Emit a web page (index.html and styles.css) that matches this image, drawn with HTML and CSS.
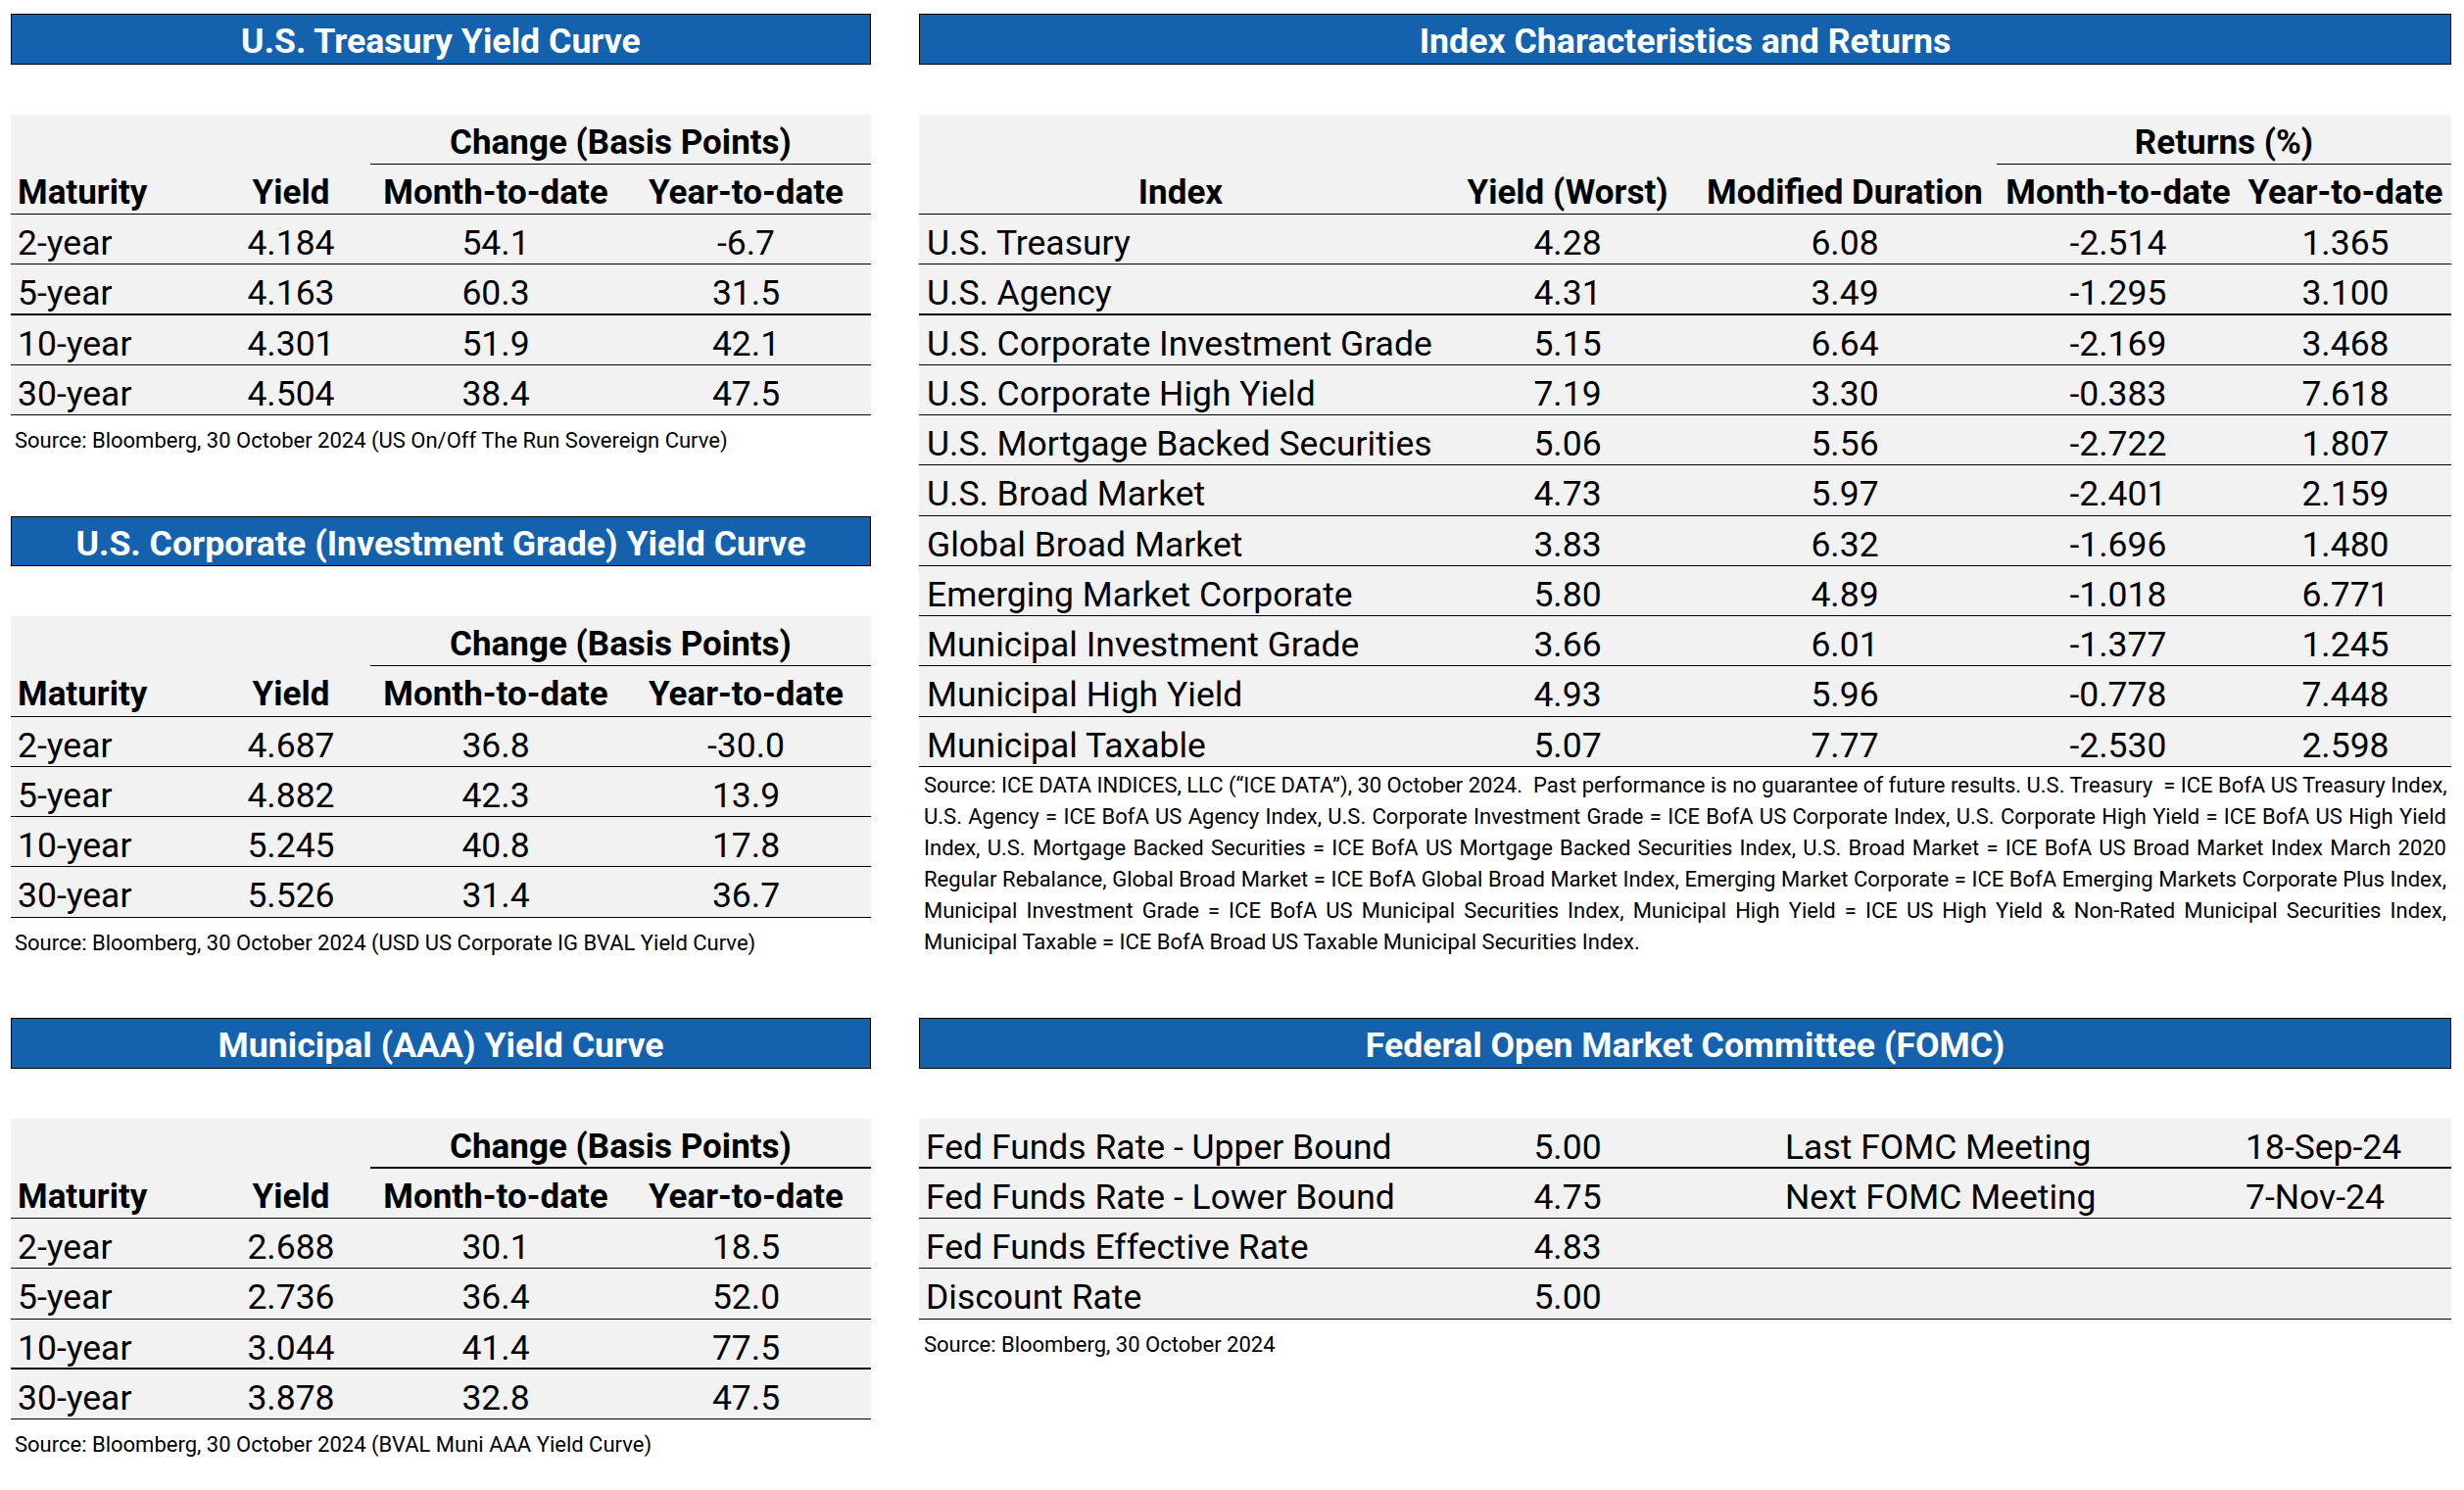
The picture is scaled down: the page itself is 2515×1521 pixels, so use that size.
FILE: index.html
```html
<!DOCTYPE html>
<html lang="en">
<head>
<meta charset="utf-8">
<title>Market Data</title>
<link rel="stylesheet" href="styles.css">
</head>
<body>
<div class="page">
  <div class="col col-left">
    <section class="block">
      <h2 class="title">U.S. Treasury Yield Curve</h2>
      <div class="spacer"></div>
      <div class="tbl curve">
        <div class="row hdr1"><span class="group">Change (Basis Points)</span></div>
        <div class="row hdr2"><span class="first">Maturity</span><span>Yield</span><span>Month-to-date</span><span>Year-to-date</span></div>
        <div class="row"><span class="first">2-year</span><span>4.184</span><span>54.1</span><span>-6.7</span></div>
        <div class="row thick"><span class="first">5-year</span><span>4.163</span><span>60.3</span><span>31.5</span></div>
        <div class="row"><span class="first">10-year</span><span>4.301</span><span>51.9</span><span>42.1</span></div>
        <div class="row"><span class="first">30-year</span><span>4.504</span><span>38.4</span><span>47.5</span></div>
      </div>
      <p class="source">Source: Bloomberg, 30 October 2024 (US On/Off The Run Sovereign Curve)</p>
    </section>

    <section class="block">
      <h2 class="title">U.S. Corporate (Investment Grade) Yield Curve</h2>
      <div class="spacer"></div>
      <div class="tbl curve">
        <div class="row hdr1"><span class="group">Change (Basis Points)</span></div>
        <div class="row hdr2"><span class="first">Maturity</span><span>Yield</span><span>Month-to-date</span><span>Year-to-date</span></div>
        <div class="row"><span class="first">2-year</span><span>4.687</span><span>36.8</span><span>-30.0</span></div>
        <div class="row"><span class="first">5-year</span><span>4.882</span><span>42.3</span><span>13.9</span></div>
        <div class="row"><span class="first">10-year</span><span>5.245</span><span>40.8</span><span>17.8</span></div>
        <div class="row"><span class="first">30-year</span><span>5.526</span><span>31.4</span><span>36.7</span></div>
      </div>
      <p class="source">Source: Bloomberg, 30 October 2024 (USD US Corporate IG BVAL Yield Curve)</p>
    </section>

    <section class="block">
      <h2 class="title">Municipal (AAA) Yield Curve</h2>
      <div class="spacer"></div>
      <div class="tbl curve">
        <div class="row hdr1"><span class="group group-thick">Change (Basis Points)</span></div>
        <div class="row hdr2"><span class="first">Maturity</span><span>Yield</span><span>Month-to-date</span><span>Year-to-date</span></div>
        <div class="row"><span class="first">2-year</span><span>2.688</span><span>30.1</span><span>18.5</span></div>
        <div class="row"><span class="first">5-year</span><span>2.736</span><span>36.4</span><span>52.0</span></div>
        <div class="row thick"><span class="first">10-year</span><span>3.044</span><span>41.4</span><span>77.5</span></div>
        <div class="row"><span class="first">30-year</span><span>3.878</span><span>32.8</span><span>47.5</span></div>
      </div>
      <p class="source">Source: Bloomberg, 30 October 2024 (BVAL Muni AAA Yield Curve)</p>
    </section>
  </div>

  <div class="col col-right">
    <section class="block block-index">
      <h2 class="title">Index Characteristics and Returns</h2>
      <div class="spacer"></div>
      <div class="tbl index">
        <div class="row hdr1"><span class="group">Returns (%)</span></div>
        <div class="row hdr2"><span>Index</span><span>Yield (Worst)</span><span>Modified Duration</span><span>Month-to-date</span><span>Year-to-date</span></div>
        <div class="row"><span class="first">U.S. Treasury</span><span>4.28</span><span>6.08</span><span>-2.514</span><span>1.365</span></div>
        <div class="row thick"><span class="first">U.S. Agency</span><span>4.31</span><span>3.49</span><span>-1.295</span><span>3.100</span></div>
        <div class="row"><span class="first">U.S. Corporate Investment Grade</span><span>5.15</span><span>6.64</span><span>-2.169</span><span>3.468</span></div>
        <div class="row"><span class="first">U.S. Corporate High Yield</span><span>7.19</span><span>3.30</span><span>-0.383</span><span>7.618</span></div>
        <div class="row"><span class="first">U.S. Mortgage Backed Securities</span><span>5.06</span><span>5.56</span><span>-2.722</span><span>1.807</span></div>
        <div class="row"><span class="first">U.S. Broad Market</span><span>4.73</span><span>5.97</span><span>-2.401</span><span>2.159</span></div>
        <div class="row"><span class="first">Global Broad Market</span><span>3.83</span><span>6.32</span><span>-1.696</span><span>1.480</span></div>
        <div class="row"><span class="first">Emerging Market Corporate</span><span>5.80</span><span>4.89</span><span>-1.018</span><span>6.771</span></div>
        <div class="row"><span class="first">Municipal Investment Grade</span><span>3.66</span><span>6.01</span><span>-1.377</span><span>1.245</span></div>
        <div class="row"><span class="first">Municipal High Yield</span><span>4.93</span><span>5.96</span><span>-0.778</span><span>7.448</span></div>
        <div class="row"><span class="first">Municipal Taxable</span><span>5.07</span><span>7.77</span><span>-2.530</span><span>2.598</span></div>
      </div>
      <div class="footnote">
        <span class="fn-line">Source: ICE DATA INDICES, LLC (“ICE DATA”), 30 October 2024.&nbsp; Past performance is no guarantee of future results. U.S. Treasury&nbsp; = ICE BofA US Treasury Index,</span>
        <span class="fn-line">U.S. Agency = ICE BofA US Agency Index, U.S. Corporate Investment Grade = ICE BofA US Corporate Index, U.S. Corporate High Yield = ICE BofA US High Yield</span>
        <span class="fn-line">Index, U.S. Mortgage Backed Securities = ICE BofA US Mortgage Backed Securities Index, U.S. Broad Market = ICE BofA US Broad Market Index March 2020</span>
        <span class="fn-line">Regular Rebalance, Global Broad Market = ICE BofA Global Broad Market Index, Emerging Market Corporate = ICE BofA Emerging Markets Corporate Plus Index,</span>
        <span class="fn-line">Municipal Investment Grade = ICE BofA US Municipal Securities Index, Municipal High Yield = ICE US High Yield &amp; Non-Rated Municipal Securities Index,</span>
        <span class="fn-line fn-last">Municipal Taxable = ICE BofA Broad US Taxable Municipal Securities Index.</span>
      </div>
    </section>

    <section class="block">
      <h2 class="title">Federal Open Market Committee (FOMC)</h2>
      <div class="spacer"></div>
      <div class="tbl fomc">
        <div class="row thick"><span class="first">Fed Funds Rate - Upper Bound</span><span class="num">5.00</span><span class="label">Last FOMC Meeting</span><span class="date">18-Sep-24</span></div>
        <div class="row"><span class="first">Fed Funds Rate - Lower Bound</span><span class="num">4.75</span><span class="label">Next FOMC Meeting</span><span class="date">7-Nov-24</span></div>
        <div class="row"><span class="first">Fed Funds Effective Rate</span><span class="num">4.83</span><span class="label"></span><span class="date"></span></div>
        <div class="row"><span class="first">Discount Rate</span><span class="num">5.00</span><span class="label"></span><span class="date"></span></div>
      </div>
      <p class="source source-fomc">Source: Bloomberg, 30 October 2024</p>
    </section>
  </div>
</div>
</body>
</html>
```

FILE: styles.css
```css
html, body {
  margin: 0;
  padding: 0;
  background: #ffffff;
}

body {
  font-family: Roboto, "Liberation Sans", Arial, sans-serif;
  color: #000000;
}

.page {
  display: grid;
  grid-template-columns: 878px 1564px;
  column-gap: 49px;
  padding: 14px 0 0 11px;
}

.col {
  display: flex;
  flex-direction: column;
}

.block {
  height: 512.5px;
  display: flex;
  flex-direction: column;
}

.block-index {
  height: 1025px;
}

.title {
  margin: 0;
  height: 51.5px;
  box-sizing: border-box;
  border: 1px solid #000;
  background: #1462ae;
  color: #ffffff;
  font-size: 35.7px;
  font-weight: 700;
  text-align: center;
  padding-top: 7px;
  line-height: 40px;
  white-space: nowrap;
}

.spacer {
  height: 51px;
}

.tbl {
  background: #f2f2f2;
}

.row {
  display: grid;
  height: 51.25px;
  box-sizing: border-box;
  border-bottom: 1px solid #000;
  font-size: 35.5px;
}

.row > span {
  padding-top: 9px;
  line-height: 40px;
  text-align: center;
  white-space: nowrap;
}

.row > span.first {
  text-align: left;
  padding-left: 7px;
}

.row.thick {
  border-bottom-width: 2px;
}

.hdr1 {
  border-bottom: none;
  font-weight: 700;
  font-size: 35px;
}

.hdr1 > span.group {
  border-bottom: 1px solid #000;
  padding-top: 9px;
}

.hdr1 > span.group-thick {
  border-bottom-width: 2px;
}

.hdr2 {
  font-weight: 700;
  font-size: 35px;
}

.hdr2 > span {
  padding-top: 9px;
}

/* yield curve tables */
.curve .row {
  grid-template-columns: 205px 162px 256px 255px;
}

.curve .hdr1 > span.group {
  grid-column: 3 / 5;
}

/* index table */
.index .row {
  grid-template-columns: 534px 256px 310px 248px 216px;
}

.index .hdr1 > span.group {
  grid-column: 4 / 6;
}

.index .row > span.first {
  padding-left: 8px;
}

/* FOMC table */
.fomc .row {
  grid-template-columns: 534px 256px 564px 210px;
}

.fomc .row > span.first {
  padding-left: 7px;
}

.fomc .row > span.label {
  text-align: left;
  padding-left: 94px;
}

.fomc .row > span.date {
  text-align: left;
}

/* sources */
.source {
  margin: 0;
  height: 51.25px;
  box-sizing: border-box;
  padding: 10px 0 0 4px;
  font-size: 22px;
  line-height: 32px;
  white-space: nowrap;
}

.source-fomc {
  padding-left: 5px;
}

.footnote {
  padding: 3px 5px 0 5px;
  font-size: 22px;
  line-height: 32px;
}

.fn-line {
  display: block;
  text-align: justify;
  text-align-last: justify;
  white-space: nowrap;
}

.fn-line.fn-last {
  text-align-last: left;
}
```
